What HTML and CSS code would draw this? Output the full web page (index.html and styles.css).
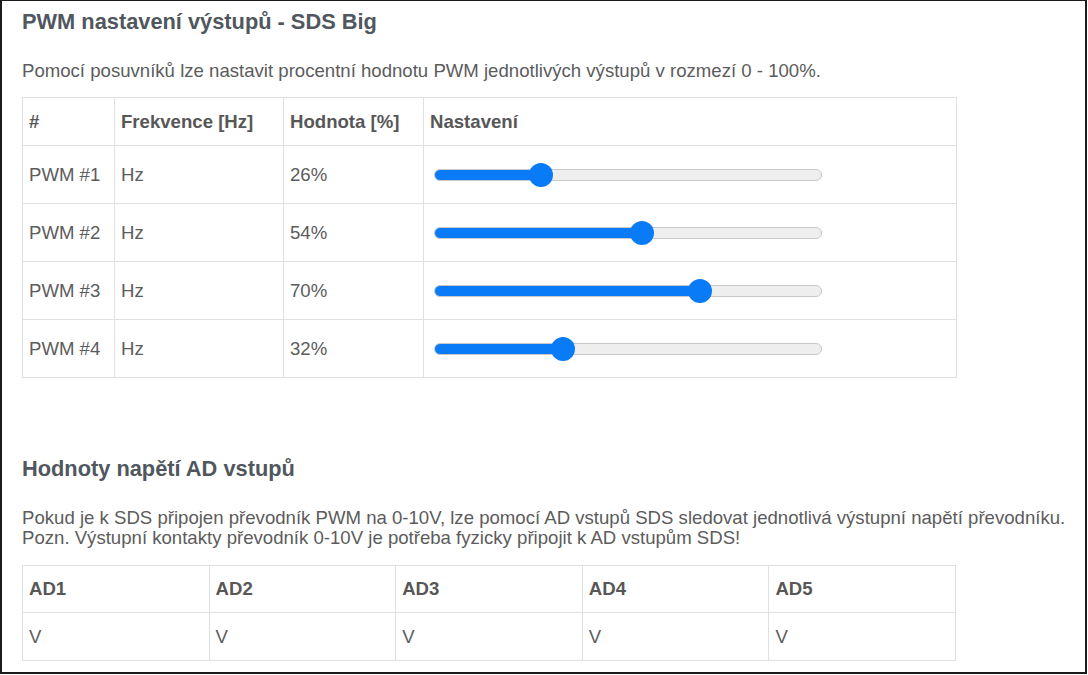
FILE: index.html
```html
<!DOCTYPE html>
<html lang="cs">
<head>
<meta charset="utf-8">
<title>PWM nastavení výstupů</title>
<link rel="stylesheet" href="styles.css">
</head>
<body>
<div class="frame">
  <h2 class="title">PWM nastavení výstupů - SDS Big</h2>
  <p class="intro">Pomocí posuvníků lze nastavit procentní hodnotu PWM jednotlivých výstupů v rozmezí 0 - 100%.</p>
  <table class="grid pwm">
    <colgroup>
      <col class="c1"><col class="c2"><col class="c3"><col class="c4">
    </colgroup>
    <thead>
      <tr><th>#</th><th>Frekvence [Hz]</th><th>Hodnota [%]</th><th>Nastavení</th></tr>
    </thead>
    <tbody>
      <tr><td>PWM #1</td><td>Hz</td><td>26%</td><td><input class="range" type="range" min="0" max="100" value="26" style="--p:0.26"></td></tr>
      <tr><td>PWM #2</td><td>Hz</td><td>54%</td><td><input class="range" type="range" min="0" max="100" value="54" style="--p:0.54"></td></tr>
      <tr><td>PWM #3</td><td>Hz</td><td>70%</td><td><input class="range" type="range" min="0" max="100" value="70" style="--p:0.70"></td></tr>
      <tr><td>PWM #4</td><td>Hz</td><td>32%</td><td><input class="range" type="range" min="0" max="100" value="32" style="--p:0.32"></td></tr>
    </tbody>
  </table>

  <h2 class="title second">Hodnoty napětí AD vstupů</h2>
  <p class="intro second">Pokud je k SDS připojen převodník PWM na 0-10V, lze pomocí AD vstupů SDS sledovat jednotlivá výstupní napětí převodníku.<br>Pozn. Výstupní kontakty převodník 0-10V je potřeba fyzicky připojit k AD vstupům SDS!</p>
  <table class="grid ad">
    <thead>
      <tr><th>AD1</th><th>AD2</th><th>AD3</th><th>AD4</th><th>AD5</th></tr>
    </thead>
    <tbody>
      <tr><td>V</td><td>V</td><td>V</td><td>V</td><td>V</td></tr>
    </tbody>
  </table>
</div>
</body>
</html>
```
FILE: styles.css
```css
* { box-sizing: border-box; }

html, body {
  margin: 0;
  padding: 0;
  background: #ffffff;
}

body {
  font-family: "Liberation Sans", Arial, sans-serif;
  font-size: 18.6px;
  color: #5c5c5c;
}

.frame {
  width: 1087px;
  height: 674px;
  border: 2px solid #1b1b1b;
  border-top-width: 1px;
  padding: 0 20px;
  overflow: hidden;
}

.title {
  margin: 9px 0 0;
  font-size: 21.8px;
  line-height: 24px;
  font-weight: bold;
  color: #50575e;
}

.title.second {
  margin-top: 79px;
}

.intro {
  margin: 27px 0 16px;
  line-height: 20px;
  color: #5c5c5c;
  white-space: nowrap;
}

.intro.second {
  margin-bottom: 17px;
}

.grid {
  width: 934px;
  border-collapse: collapse;
  table-layout: fixed;
}

.grid th,
.grid td {
  border: 1px solid #e0e0e0;
  padding: 0 6px;
  text-align: left;
  vertical-align: middle;
  line-height: 20px;
}

.grid th {
  height: 48px;
  font-weight: bold;
  color: #575757;
}

.pwm td {
  height: 58px;
}

.ad th {
  height: 47px;
}

.ad td {
  height: 48px;
}

.pwm .c1 { width: 92px; }
.pwm .c2 { width: 169px; }
.pwm .c3 { width: 140px; }
.pwm .c4 { width: 533px; }

.range {
  -webkit-appearance: none;
  appearance: none;
  display: block;
  width: 388px;
  height: 24px;
  margin: 0 0 0 4px;
  padding: 0;
  background: transparent;
}

.range::-webkit-slider-runnable-track {
  height: 12px;
  border-radius: 6px;
  border: 1px solid #c9c9c9;
  background: linear-gradient(to right,
    #0a7bf6 0,
    #0a7bf6 calc(11px + (100% - 22px) * var(--p)),
    #eeeeee calc(11px + (100% - 22px) * var(--p)),
    #eeeeee 100%);
}

.range::-webkit-slider-thumb {
  -webkit-appearance: none;
  appearance: none;
  width: 24px;
  height: 24px;
  margin-top: -7px;
  border-radius: 50%;
  border: none;
  background: #0a7bf6;
}
```
